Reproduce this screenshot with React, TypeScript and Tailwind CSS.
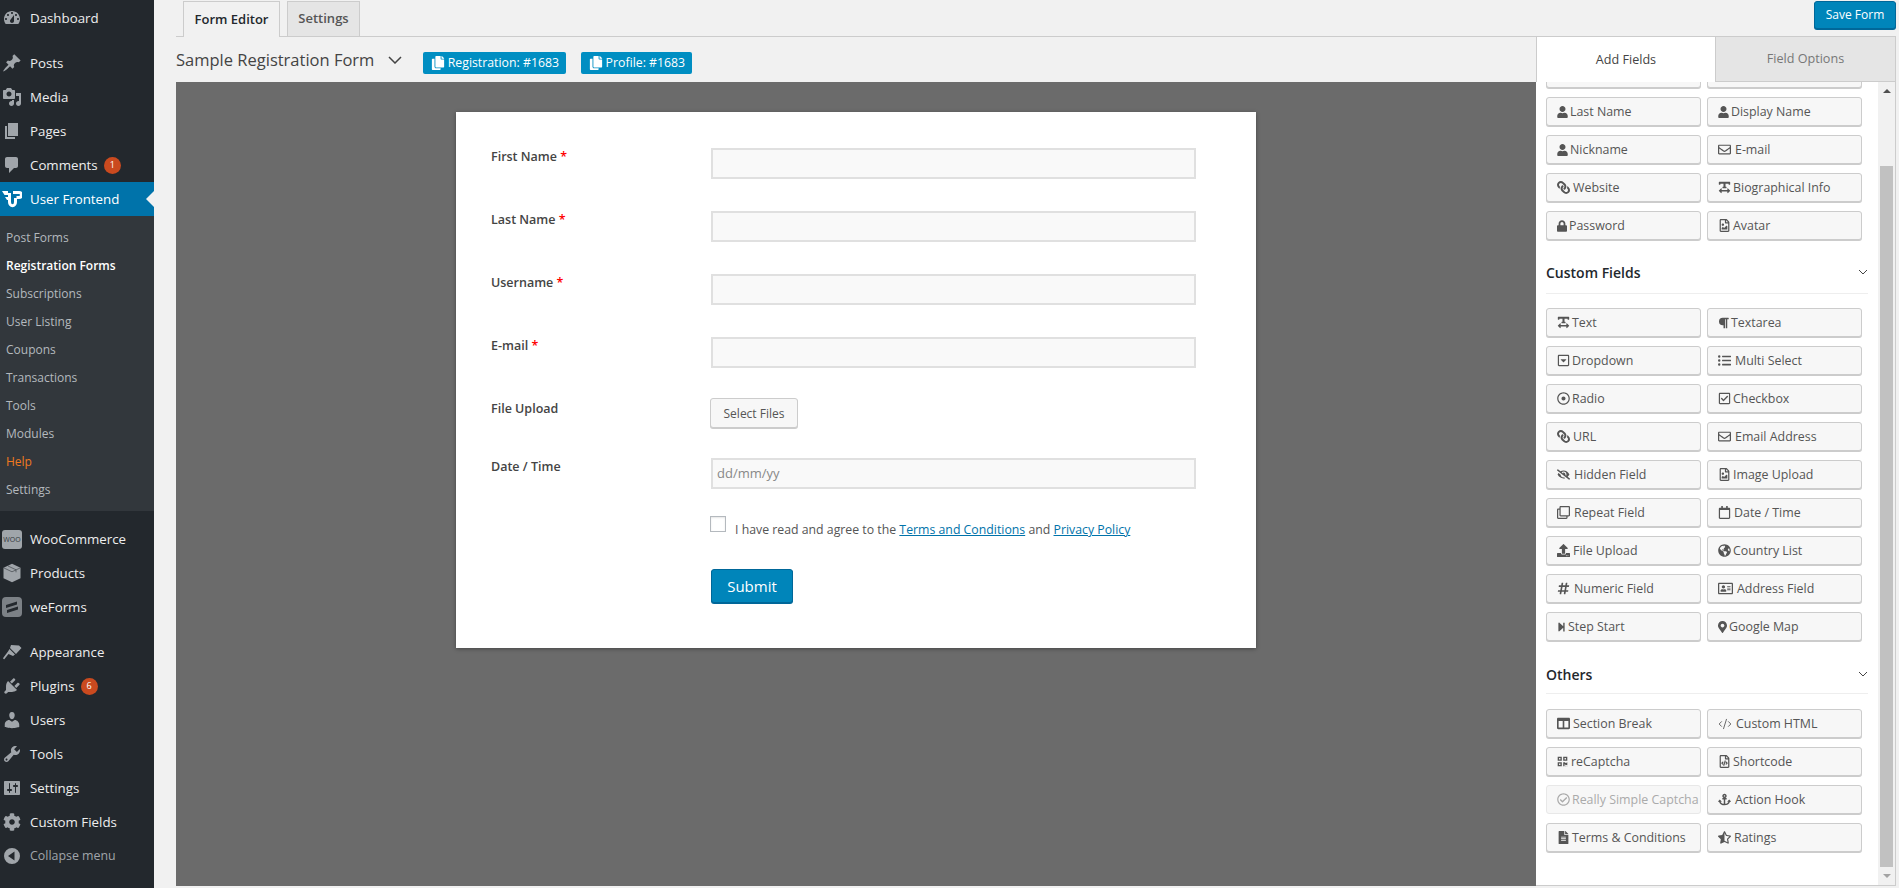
import type { ReactNode } from "react";
import { CodeXml } from "lucide-react";
import {
  FaAnchor, FaCog, FaColumns, FaCopy, FaEyeSlash, FaFileAlt, FaGlobeAmericas, FaHashtag,
  FaLink, FaListUl, FaLock, FaMapMarkerAlt, FaParagraph, FaQrcode, FaRegAddressCard, FaRegCalendar,
  FaRegCaretSquareDown, FaRegCheckCircle, FaRegCheckSquare, FaRegClone, FaRegDotCircle, FaRegEnvelope,
  FaRegFileCode, FaRegFileImage, FaStarHalfAlt, FaStepForward, FaTextWidth, FaUpload, FaUser,
} from "react-icons/fa";

const Dash = ({ d }: { d: string }) => (
  <svg viewBox="0 0 20 20" className="size-5 fill-[#a0a5aa]" fillRule="evenodd">
    <path d={d} />
  </svg>
);

const icons = {
  dashboard: "M3.76 16h12.48c1.1-1.37 1.76-3.11 1.76-5 0-4.42-3.58-8-8-8s-8 3.58-8 8c0 1.89.66 3.63 1.76 5zM10 4c.55 0 1 .45 1 1s-.45 1-1 1-1-.45-1-1 .45-1 1-1zM6 6c.55 0 1 .45 1 1s-.45 1-1 1-1-.45-1-1 .45-1 1-1zm8 0c.55 0 1 .45 1 1s-.45 1-1 1-1-.45-1-1 .45-1 1-1zm-5.37 5.55L12 7v6c0 1.1-.9 2-2 2s-2-.9-2-2c0-.57.24-1.08.63-1.45zM4 10c.55 0 1 .45 1 1s-.45 1-1 1-1-.45-1-1 .45-1 1-1zm12 0c.55 0 1 .45 1 1s-.45 1-1 1-1-.45-1-1 .45-1 1-1z",
  post: "M10.44 3.02l1.82-1.82 6.36 6.35-1.83 1.82c-1.05-.68-2.48-.57-3.41.36l-.75.75c-.92.93-1.04 2.35-.35 3.41l-1.83 1.82-2.41-2.41-2.8 2.79c-.42.42-3.38 2.71-3.8 2.29s1.86-3.39 2.28-3.81l2.79-2.79L4.1 9.36l1.83-1.82c1.05.69 2.48.57 3.4-.36l.75-.75c.93-.92 1.05-2.35.36-3.41z",
  media: "M13 11V4c0-.55-.45-1-1-1h-1.67L9 1H5L3.67 3H2c-.55 0-1 .45-1 1v7c0 .55.45 1 1 1h10c.55 0 1-.45 1-1zM7 4.5c1.38 0 2.5 1.12 2.5 2.5S8.38 9.5 7 9.5 4.5 8.38 4.5 7 5.62 4.5 7 4.5zM14 6h5v10.5c0 1.38-1.12 2.5-2.5 2.5S14 17.88 14 16.5s1.12-2.5 2.5-2.5c.17 0 .34.02.5.05V9h-3V6zm-4 8.05V13h2v3.5c0 1.38-1.12 2.5-2.5 2.5S7 17.88 7 16.5 8.12 14 9.5 14c.17 0 .34.02.5.05z",
  page: "M6 15V2h10v13H6zm-1 1h8v2H3V5h2v11z",
  comments: "M5 2h9c1.1 0 2 .9 2 2v7c0 1.1-.9 2-2 2h-2l-5 5v-5H5c-1.1 0-2-.9-2-2V4c0-1.1.9-2 2-2z",
  appearance: "M9 3l8 .5 2.5 2.500-5.500 6-6-6zM7.500 7l5.500 5.500-2 1.500-4.500-2-4 5c-.6.6-1.800-.4-1.200-1.200L6 9.500z",
  plugins: "M13.11 4.36L9.87 7.6 8 5.73l3.24-3.24c.35-.34 1.05-.2 1.56.32.52.51.66 1.21.31 1.55zm-8 1.77l.91-1.12 9.01 9.01-1.19.84c-.71.71-2.63 1.16-3.82 1.16H6.14L4.9 17.26c-.59.59-1.54.59-2.12 0-.59-.58-.59-1.53 0-2.12l1.24-1.24v-3.88c0-1.13.52-3.13 1.09-3.89zm7.26 3.97l3.24-3.24c.34-.35 1.04-.2 1.56.31.51.52.66 1.22.31 1.56l-3.24 3.25z",
  users: "M10 9.25c-2.27 0-2.73-3.44-2.73-3.44C7 4.02 7.82 2 9.97 2c2.16 0 2.98 2.02 2.71 3.81 0 0-.41 3.44-2.68 3.44zm0 2.57L12.72 10c2.39 0 4.52 2.33 4.52 4.53v2.49s-3.65 1.13-7.24 1.13c-3.65 0-7.24-1.13-7.24-1.13v-2.49c0-2.25 1.94-4.48 4.47-4.48z",
  tools: "M16.68 9.77c-1.34 1.34-3.3 1.67-4.95.99l-5.41 6.52c-.99.99-2.59.99-3.57 0-.99-.98-.99-2.58 0-3.57l6.52-5.42c-.68-1.65-.35-3.61.99-4.95 1.28-1.28 3.12-1.62 4.72-1.06l-2.89 2.89 2.82 2.82 2.86-2.87c.53 1.58.18 3.39-1.09 4.67zM3.81 16.21c.4.39 1.04.39 1.43 0 .4-.4.4-1.04 0-1.43-.39-.4-1.03-.4-1.43 0-.39.39-.39 1.03 0 1.43z",
  settings: "M18 16V4c0-.55-.45-1-1-1H3c-.55 0-1 .45-1 1v12c0 .55.45 1 1 1h14c.55 0 1-.45 1-1zM8 11h1c.55 0 1 .45 1 1s-.45 1-1 1H8v1.5c0 .28-.22.5-.5.5s-.5-.22-.5-.5V13H6c-.55 0-1-.45-1-1s.45-1 1-1h1V5.500c0-.28.22-.5.5-.5s.5.22.5.5V11zm5-2h-1c-.55 0-1-.45-1-1s.45-1 1-1h1V5.500c0-.28.22-.5.5-.5s.5.22.5.5V7h1c.55 0 1 .45 1 1s-.45 1-1 1h-1v5.500c0 .28-.22.5-.5.5s-.5-.22-.5-.5V9z",
  collapse: "M10 2a8 8 0 1 0 0 16 8 8 0 0 0 0-16zm2.500 3.500v9L6 10z",
};

const Badge = ({ n }: { n: number }) => (
  <span className="ml-[6px] flex size-[17px] items-center justify-center rounded-full bg-[#ca4a1f] text-[9px] text-white">
    {n}
  </span>
);

const NavItem = ({ icon, label, badge, muted }: { icon: ReactNode; label: string; badge?: number; muted?: boolean }) => (
  <div className={`flex h-[34px] items-center ${muted ? "text-[12.4px] text-[#a0a5aa]" : "text-[13.3px] text-[#eeeeee]"}`}>
    <span className="flex w-[30px] shrink-0 justify-center pr-[6px]">{icon}</span>
    <span className="pt-px">{label}</span>
    {badge ? <Badge n={badge} /> : null}
  </div>
);

const subItems = ["Post Forms", "Registration Forms", "Subscriptions", "User Listing", "Coupons", "Transactions", "Tools", "Modules", "Help", "Settings"];

const Sidebar = () => (
  <aside className="flex w-[154px] shrink-0 flex-col bg-[#23282d] pt-px">
    <NavItem icon={<Dash d={icons.dashboard} />} label="Dashboard" />
    <div className="mt-[11px]">
      <NavItem icon={<Dash d={icons.post} />} label="Posts" />
      <NavItem icon={<Dash d={icons.media} />} label="Media" />
      <NavItem icon={<Dash d={icons.page} />} label="Pages" />
      <NavItem icon={<Dash d={icons.comments} />} label="Comments" badge={1} />
    </div>
    <div className="flex h-[34px] items-center bg-[#0073aa] text-[13.3px] text-white">
      <span className="flex w-[30px] shrink-0 justify-center pr-[6px]">
        <svg viewBox="0 0 20 18" className="h-[18px] w-5">
          <path d="M0 1h6v4H2.500zM3 7h3v3H5z" fill="#ffffff" />
          <path d="M11 1h6a3.500 3.500 0 0 1 0 8h-2.500V6H17a1 1 0 0 0 0-2h-6z" fill="#ffffff" />
          <path d="M7.500 3v9a3 3.800 0 0 0 6 0V8" fill="none" stroke="#ffffff" strokeWidth="3" />
        </svg>
      </span>
      <span className="pt-px">User Frontend</span>
      <span className="ml-auto size-0 border-y-[8px] border-r-[8px] border-y-transparent border-r-[#f1f1f1]" />
    </div>
    <div className="bg-[#32373c] pt-[7px] pb-[8px] pl-[6px] text-xs text-[#b4b9be]">
      {subItems.map((s) => (
        <div
          key={s}
          className={`flex h-7 items-center pt-px ${s === "Registration Forms" ? "font-semibold text-white" : s === "Help" ? "text-[#f0791f]" : ""}`}
        >
          {s}
        </div>
      ))}
    </div>
    <div className="mt-[11px]">
      <NavItem
        icon={
          <span className="flex h-[19px] w-5 items-center justify-center rounded-[3px] bg-[#a0a5aa] text-[7px] leading-none text-[#32373c]">WOO</span>
        }
        label="WooCommerce"
      />
      <NavItem
        icon={
          <svg viewBox="0 0 20 20" className="size-5">
            <path d="M10 .8l8.500 4v10.400L10 19.200l-8.500-4V4.800z" fill="#a0a5aa" />
            <path d="M2 5l8 3.800L18 5M6 3l8 3.800v2.500" fill="none" stroke="#32373c" strokeWidth=".6" />
          </svg>
        }
        label="Products"
      />
      <NavItem
        icon={
          <svg viewBox="0 0 20 20" className="size-5">
            <rect width="20" height="20" rx="4" fill="#7c8186" />
            <path d="M4 8l11-3.500v3L4 11zM5 13l11-3.500v3L5 16z" fill="#23282d" />
          </svg>
        }
        label="weForms"
      />
    </div>
    <div className="mt-[11px]">
      <NavItem icon={<Dash d={icons.appearance} />} label="Appearance" />
      <NavItem icon={<Dash d={icons.plugins} />} label="Plugins" badge={6} />
      <NavItem icon={<Dash d={icons.users} />} label="Users" />
      <NavItem icon={<Dash d={icons.tools} />} label="Tools" />
      <NavItem icon={<Dash d={icons.settings} />} label="Settings" />
      <NavItem icon={<FaCog className="size-[18px] text-[#a0a5aa]" />} label="Custom Fields" />
      <NavItem muted icon={<Dash d={icons.collapse} />} label="Collapse menu" />
    </div>
  </aside>
);

const labelCls = "w-[220px] shrink-0 text-[12.5px] leading-5 font-semibold text-[#444444]";
const inputCls = "h-[31px] w-[485px] border-2 border-[#e0e0e0] bg-[#f9f9f9]";

const TextRow = ({ label }: { label: string }) => (
  <div className="mb-8 flex">
    <div className={`${labelCls} -mt-px`}>
      {label} <span className="text-[#ff0000]">*</span>
    </div>
    <div className={inputCls} />
  </div>
);

const FormCard = () => (
  <div className="h-[536px] w-[800px] bg-white pt-9 pl-[35px] text-[#444444] shadow-[0_1px_4px_rgba(0,0,0,0.35)]">
    <TextRow label="First Name" />
    <TextRow label="Last Name" />
    <TextRow label="Username" />
    <TextRow label="E-mail" />
    <div className="-mt-[2px] flex">
      <div className={`${labelCls} mt-px`}>File Upload</div>
      <div className="-ml-px flex h-[30px] w-[88px] items-center justify-center rounded-[3px] border border-[#cccccc] bg-[#f7f7f7] pt-px text-xs text-[#555555] shadow-[0_1px_0_#cccccc]">
        Select Files
      </div>
    </div>
    <div className="mt-[30px] flex">
      <div className={`${labelCls} -mt-px`}>Date / Time</div>
      <div className={`${inputCls} flex items-center pl-[4px] text-[13px] text-[#888888]`}>dd/mm/yy</div>
    </div>
    <div className="mt-[27px] flex pl-[219px]">
      <div className="size-4 border border-[#b4b9be] bg-white shadow-[inset_0_1px_2px_rgba(0,0,0,0.1)]" />
      <div className="mt-1 ml-[9px] text-[12.3px] leading-5 text-[#555555]">
        I have read and agree to the <span className="text-[#0073aa] underline">Terms and Conditions</span> and{" "}
        <span className="text-[#0073aa] underline">Privacy Policy</span>
      </div>
    </div>
    <div className="mt-[29px] ml-[220px] flex h-[34px] w-[82px] items-center justify-center rounded-[3px] border border-[#006799] bg-[#0085ba] text-[15px] text-white shadow-[0_1px_0_#006799]">
      Submit
    </div>
  </div>
);

type Field = { icon?: ReactNode; label?: string; w?: string; disabled?: boolean };

const FieldButton = ({ icon, label, w, disabled }: Field) => (
  <div
    className={`flex h-[29px] items-center gap-[2px] overflow-hidden rounded-[3px] border bg-[#f7f7f7] pl-[10px] text-[12.4px] whitespace-nowrap ${
      disabled ? "border-[#e8e8e8] text-[#aaaaaa]" : "border-[#cccccc] text-[#555555] shadow-[0_1px_0_#cccccc]"
    }`}
  >
    {icon ? <span className={`flex shrink-0 text-[13px] ${w}`}>{icon}</span> : null}
    <span className="pt-px">{label}</span>
  </div>
);

const Fields = ({ items }: { items: Field[] }) => (
  <div className="grid grid-cols-[155px_155px] gap-x-[6px] gap-y-[9px]">
    {items.map((f, i) => (
      <FieldButton key={i} {...f} />
    ))}
  </div>
);

const SectionHead = ({ title, cls }: { title: string; cls: string }) => (
  <div className={`flex w-[322px] items-start justify-between border-b border-[#eeeeee] text-sm leading-5 font-semibold text-[#23282d] ${cls}`}>
    {title}
    <svg viewBox="0 0 10 6" className="mt-[6px] h-[6px] w-[10px] fill-none stroke-[#444444]">
      <path d="M1 1l4 4 4-4" />
    </svg>
  </div>
);

const user = <FaUser className="text-[12px]" />;
const link = <FaLink className="-scale-x-100" />;

// the first row sits mostly under the tabs, only its bottom edge shows
const profile: Field[] = [
  {},
  {},
  { icon: user, label: "Last Name", w: "w-[11px]" },
  { icon: user, label: "Display Name", w: "w-[11px]" },
  { icon: user, label: "Nickname", w: "w-[11px]" },
  { icon: <FaRegEnvelope />, label: "E-mail", w: "w-[15px]" },
  { icon: link, label: "Website", w: "w-[14px]" },
  { icon: <FaTextWidth />, label: "Biographical Info", w: "w-[13px]" },
  { icon: <FaLock className="text-[12px]" />, label: "Password", w: "w-[10px]" },
  { icon: <FaRegFileImage />, label: "Avatar", w: "w-[13px]" },
];

const custom: Field[] = [
  { icon: <FaTextWidth />, label: "Text", w: "w-[13px]" },
  { icon: <FaParagraph className="text-[12px]" />, label: "Textarea", w: "w-[11px]" },
  { icon: <FaRegCaretSquareDown />, label: "Dropdown", w: "w-[13px]" },
  { icon: <FaListUl />, label: "Multi Select", w: "w-[15px]" },
  { icon: <FaRegDotCircle />, label: "Radio", w: "w-[13px]" },
  { icon: <FaRegCheckSquare />, label: "Checkbox", w: "w-[13px]" },
  { icon: link, label: "URL", w: "w-[14px]" },
  { icon: <FaRegEnvelope />, label: "Email Address", w: "w-[15px]" },
  { icon: <FaEyeSlash />, label: "Hidden Field", w: "w-[15px]" },
  { icon: <FaRegFileImage />, label: "Image Upload", w: "w-[13px]" },
  { icon: <FaRegClone />, label: "Repeat Field", w: "w-[15px]" },
  { icon: <FaRegCalendar />, label: "Date / Time", w: "w-[14px]" },
  { icon: <FaUpload />, label: "File Upload", w: "w-[14px]" },
  { icon: <FaGlobeAmericas />, label: "Country List", w: "w-[13px]" },
  { icon: <FaHashtag />, label: "Numeric Field", w: "w-[15px]" },
  { icon: <FaRegAddressCard className="text-[15px]" />, label: "Address Field", w: "w-[17px]" },
  { icon: <FaStepForward className="text-[10px]" />, label: "Step Start", w: "w-[9px]" },
  { icon: <FaMapMarkerAlt className="text-[12px]" />, label: "Google Map", w: "w-[9px]" },
];

const others: Field[] = [
  { icon: <FaColumns />, label: "Section Break", w: "w-[14px]" },
  { icon: <CodeXml size={14} strokeWidth={1.5} />, label: "Custom HTML", w: "w-[16px]" },
  { icon: <FaQrcode className="text-[11px]" />, label: "reCaptcha", w: "w-[12px]" },
  { icon: <FaRegFileCode />, label: "Shortcode", w: "w-[13px]" },
  { icon: <FaRegCheckCircle />, label: "Really Simple Captcha", w: "w-[13px]", disabled: true },
  { icon: <FaAnchor />, label: "Action Hook", w: "w-[15px]" },
  { icon: <FaFileAlt />, label: "Terms & Conditions", w: "w-[13px]" },
  { icon: <FaStarHalfAlt />, label: "Ratings", w: "w-[14px]" },
];

const Panel = () => (
  <div className="flex w-[360px] shrink-0 flex-col border-r border-b border-[#cccccc] bg-white">
    <div className="flex h-[45px] shrink-0 text-[12.6px]">
      <div className="flex w-[179px] items-center justify-center border-l border-[#cccccc] bg-white pt-px text-[#444444]">Add Fields</div>
      <div className="flex flex-1 items-center justify-center border-b border-l border-[#cccccc] bg-[#e5e5e5] pt-px text-[#777777]">Field Options</div>
    </div>
    <div className="flex min-h-0 flex-1">
      <div className="w-[342px] shrink-0 overflow-hidden pl-[10px]">
        <div className="-mt-[23px]">
          <Fields items={profile} />
          <SectionHead title="Custom Fields" cls="mt-[23px] mb-[14px] h-[31px]" />
          <Fields items={custom} />
          <SectionHead title="Others" cls="mt-[24px] mb-[15px] h-[29px]" />
          <Fields items={others} />
        </div>
      </div>
      <div className="flex w-[17px] flex-col items-center bg-[#f1f1f1]">
        <span className="mt-[7px] size-0 border-x-[4px] border-b-[4px] border-x-transparent border-b-[#505050]" />
        <div className="mt-[73px] w-[13px] flex-1 bg-[#c1c1c1]" />
        <span className="my-[7px] size-0 border-x-[4px] border-t-[4px] border-x-transparent border-t-[#a3a3a3]" />
      </div>
    </div>
  </div>
);

export default function App() {
  return (
    <div className="flex h-[888px] w-[1899px] overflow-hidden bg-[#f1f1f1] font-['Open_Sans',sans-serif]">
      <Sidebar />
      <main className="flex min-w-0 flex-1 flex-col pr-[3px] pb-[2px] pl-[22px]">
        <div className="flex h-[37px] shrink-0 items-start border-b border-[#cccccc] pt-px pl-[7px]">
          <div className="flex h-9 w-[97px] items-center justify-center border border-b-0 border-[#cccccc] bg-[#f1f1f1] text-[13px] font-semibold text-[#23282d]">
            Form Editor
          </div>
          <div className="ml-[7px] flex h-[35px] w-[73px] items-center justify-center border border-b-0 border-[#cccccc] bg-[#e5e5e5] text-[13px] font-semibold text-[#555555]">
            Settings
          </div>
          <div className="ml-auto flex h-[28px] w-[82px] items-center justify-center rounded-[3px] border border-[#006799] bg-[#0085ba] text-xs text-white shadow-[0_1px_0_#006799]">
            Save Form
          </div>
        </div>
        <div className="flex min-h-0 flex-1">
          <div className="flex min-w-0 flex-1 flex-col">
            <div className="flex h-[45px] shrink-0 items-center">
              <span className="pt-px text-[16.5px] text-[#444444]">Sample Registration Form</span>
              <svg viewBox="0 0 14 8" className="ml-[14px] h-2 w-[14px] fill-none stroke-[#444444] stroke-[1.5]">
                <path d="M1 1l6 6 6-6" />
              </svg>
              <span className="mt-[7px] ml-[21px] flex h-[22px] w-[143px] items-center justify-center gap-[3px] rounded-[2px] bg-[#008ec2] text-[12.3px] text-white">
                <FaCopy className="text-[14px]" /> Registration: #1683
              </span>
              <span className="mt-[7px] ml-[15px] flex h-[22px] w-[111px] items-center justify-center gap-[3px] rounded-[2px] bg-[#008ec2] text-[12.3px] text-white">
                <FaCopy className="text-[14px]" /> Profile: #1683
              </span>
            </div>
            <div className="flex flex-1 items-start justify-center bg-[#6b6b6b] pt-[30px]">
              <FormCard />
            </div>
          </div>
          <Panel />
        </div>
      </main>
    </div>
  );
}
